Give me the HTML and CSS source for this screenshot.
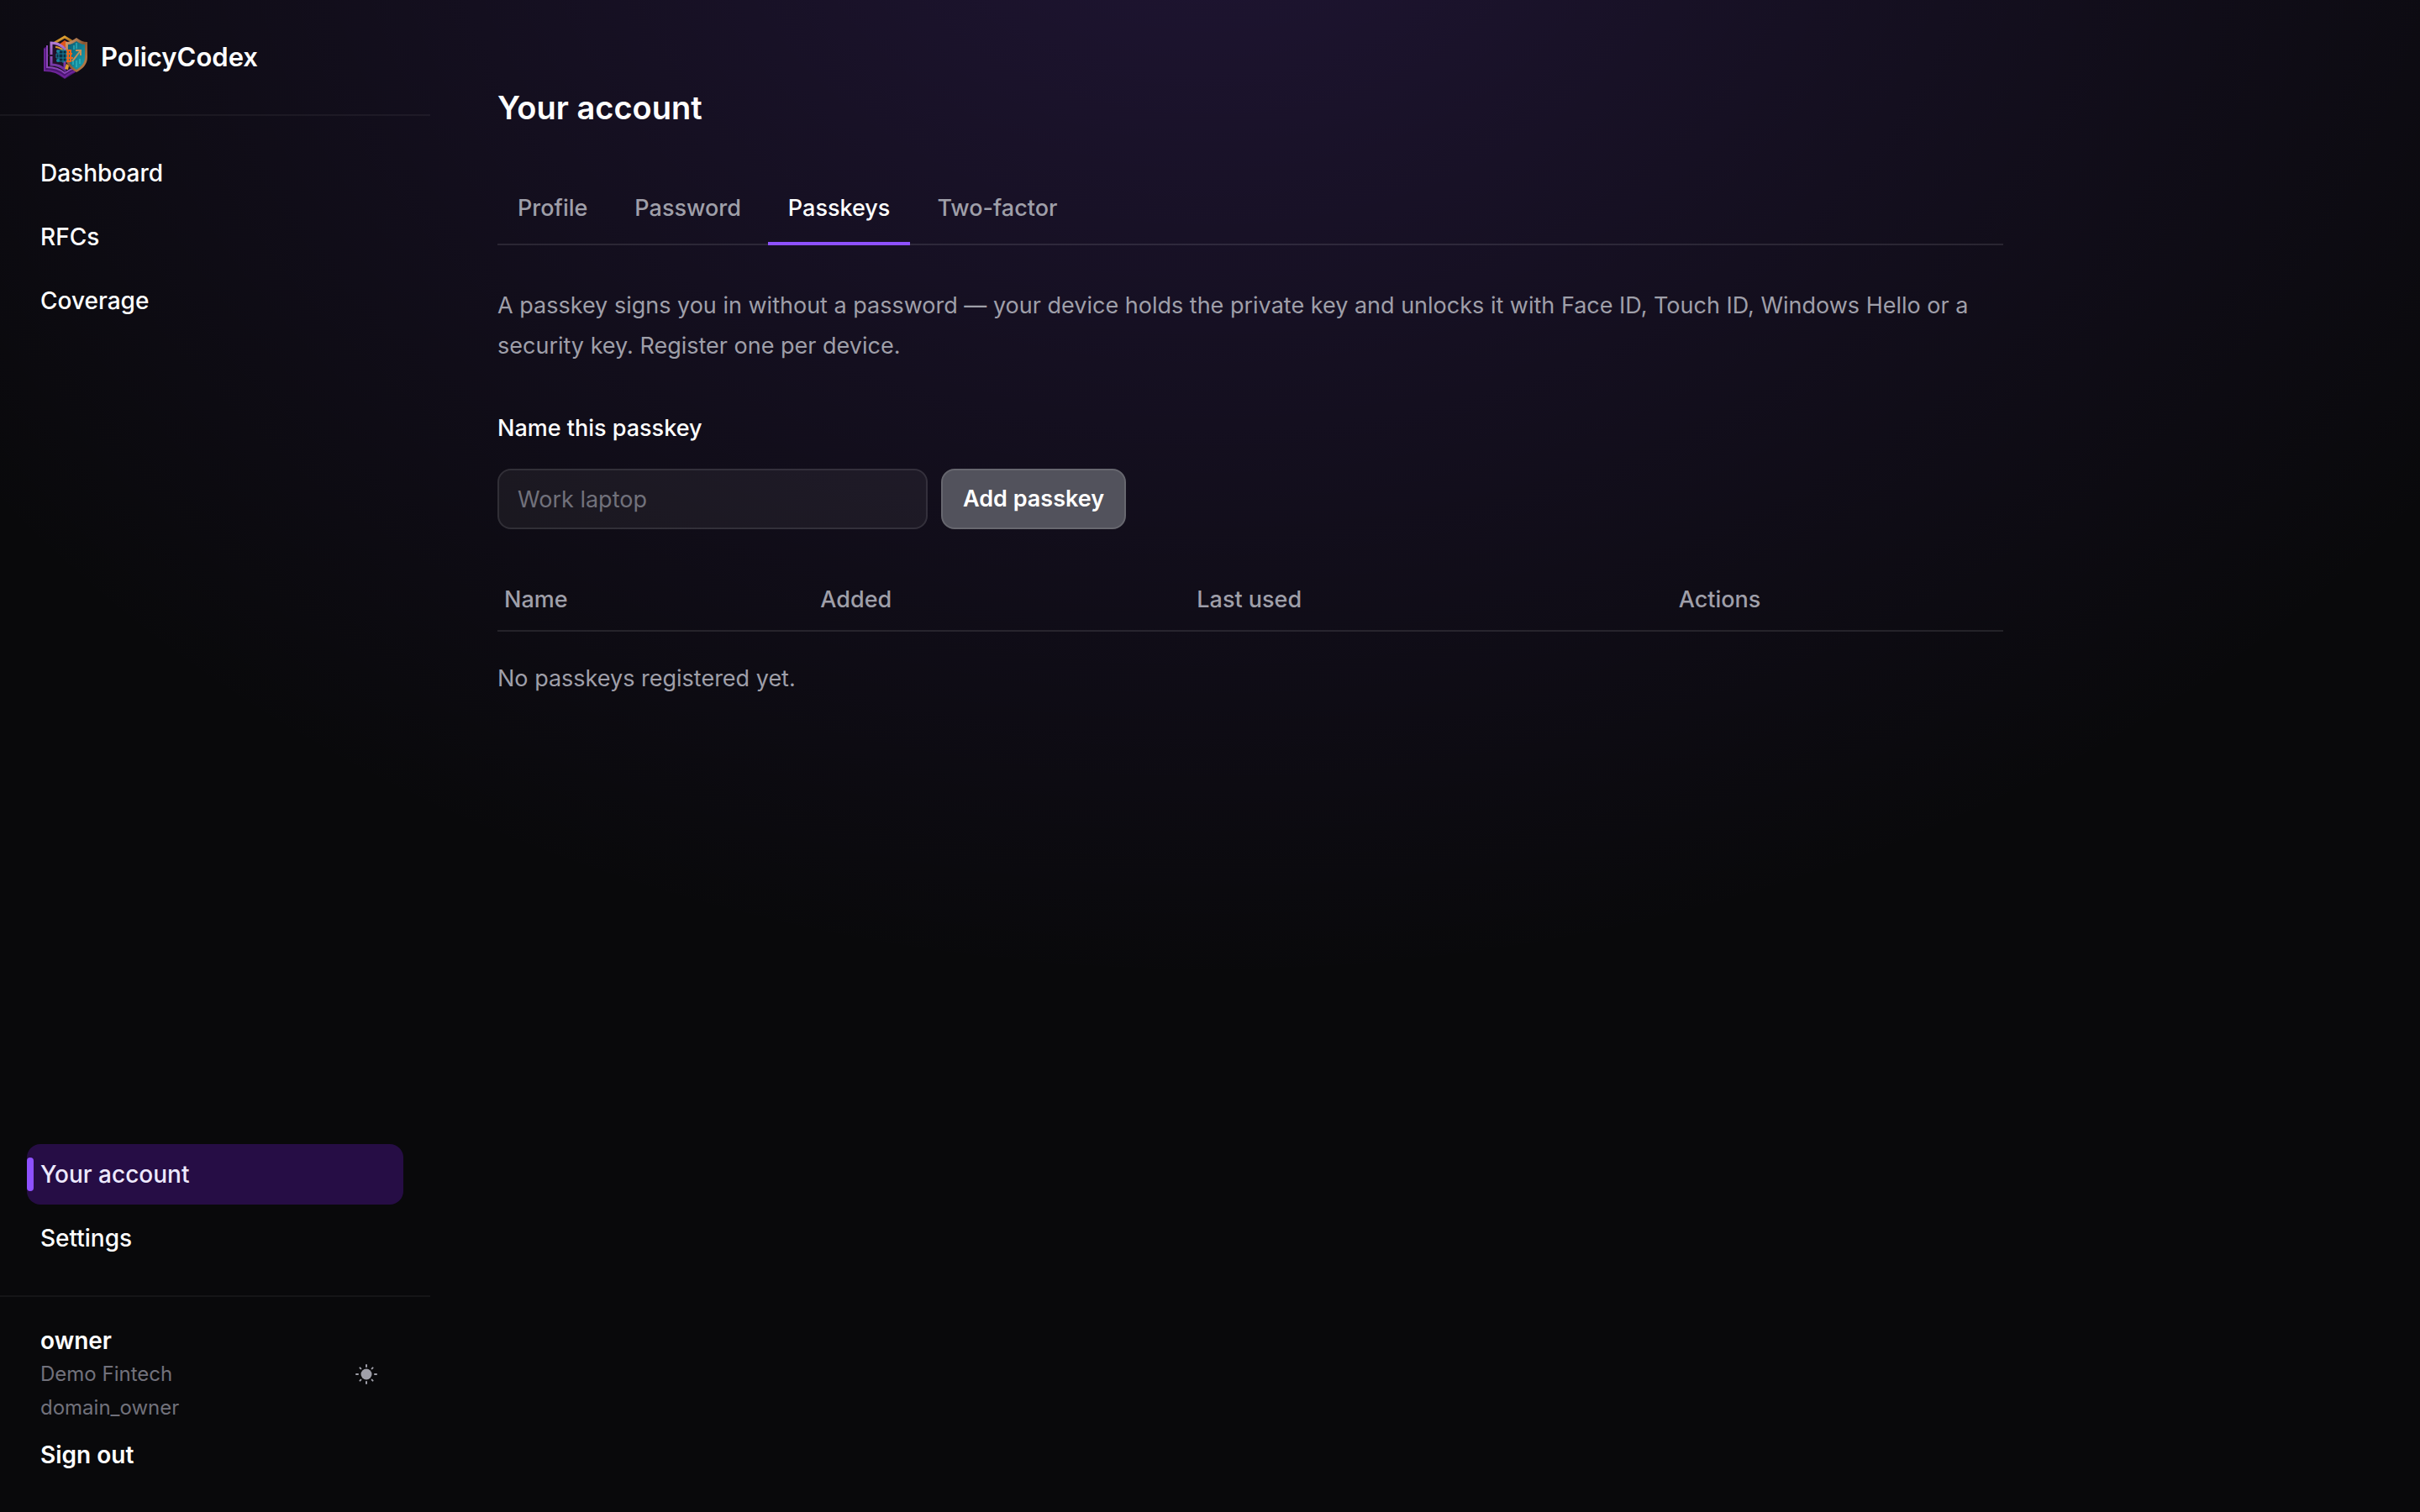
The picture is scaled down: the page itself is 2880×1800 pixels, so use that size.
FILE: index.html
```html
<!DOCTYPE html>
<html lang="en">
<head>
    <meta charset="UTF-8">
    <meta name="viewport" content="width=device-width, initial-scale=1">
    <title>Your account - PolicyCodex</title>
    <link rel="stylesheet" href="styles.css">
</head>
<body>
    <aside class="sidebar">
        <a class="brand" href="#">
            <svg class="brand-logo" viewBox="0 0 56 56" aria-hidden="true">
                <defs>
                    <linearGradient id="gold" x1="0" y1="0" x2="1" y2="1">
                        <stop offset="0" stop-color="#f2b53a"/>
                        <stop offset="1" stop-color="#9a5d14"/>
                    </linearGradient>
                    <linearGradient id="bronze" x1="0" y1="0" x2="1" y2="1">
                        <stop offset="0" stop-color="#e0a878"/>
                        <stop offset="0.5" stop-color="#8a5630"/>
                        <stop offset="1" stop-color="#c98a52"/>
                    </linearGradient>
                    <linearGradient id="teal" x1="0" y1="0" x2="1" y2="1">
                        <stop offset="0" stop-color="#0c5a72"/>
                        <stop offset="1" stop-color="#1ca3b0"/>
                    </linearGradient>
                    <linearGradient id="page" x1="0" y1="0" x2="0" y2="1">
                        <stop offset="0" stop-color="#b07ad6"/>
                        <stop offset="1" stop-color="#6a2a9c"/>
                    </linearGradient>
                </defs>
                <!-- gold hexagon behind the book -->
                <path d="M29 3 44 11v30L29 50 10 41V14z" fill="#17101c"/>
                <path d="M17 11 29 4l10 6" fill="none" stroke="url(#gold)" stroke-width="3"/>
                <path d="m22 13 7-5 6 4-6 5z" fill="#e2571a"/>
                <!-- book pages -->
                <path d="M4 17v26l11 2 14 9 13-8v-5l-13 6-13-6-9-2V16z" fill="#4b1672"/>
                <path d="M8 14v26c8 0 15 2 21 7 4-3 8-5 12-6" fill="none" stroke="#8a46b8" stroke-width="2"/>
                <path d="M5 18v26c9 0 17 2 24 8 4-4 8-6 12-7" fill="none" stroke="#6d2599" stroke-width="2"/>
                <path d="M13 11c7 0 12 3 16 7v25c-4-4-9-6-16-6z" fill="#221029" stroke="url(#page)" stroke-width="3"/>
                <path d="M18 16c4 0 7 2 10 4" fill="none" stroke="#d99a2c" stroke-width="2"/>
                <path d="M9 26h12" stroke="#251130" stroke-width="2"/>
                <path d="m29 42 2-6 3 2-1 5z" fill="#e0a030"/>
                <!-- shield -->
                <path d="M43 5c4 3 8 5 13 5v18c0 9-6 14-13 18-7-4-12-9-13-17V10c5 0 9-2 13-5z" fill="url(#bronze)"/>
                <path d="M43 9c3 2 6 4 10 4v15c0 7-4 11-10 15-6-4-9-8-10-14V13c4 0 7-2 10-4z" fill="url(#teal)"/>
                <path d="m38 33 10-13m0 6v-6h-6" fill="none" stroke="#c98f55" stroke-width="2"/>
                <path d="M40 14v5m3-8v7m4 12v6m-4-4v8m-4-7v4" stroke="#36cad0" stroke-width="1"/>
                <!-- circuit between book and shield -->
                <path d="M22 20h9v13h-9zM19 24h12v5H19zM27 18v17" fill="#0c2c40" stroke="#14809c" stroke-width="1"/>
                <path d="M31 20h5v13h-5m0-9h7m-7 5h8m-6-10v15" fill="none" stroke="#ea641c" stroke-width="2"/>
                <circle cx="21" cy="21" r="2" fill="#17849f"/>
                <circle cx="21" cy="32" r="2" fill="#17849f"/>
            </svg>
            <span>PolicyCodex</span>
        </a>

        <nav class="nav" aria-label="Main">
            <a class="nav-item" href="#">Dashboard</a>
            <a class="nav-item" href="#">RFCs</a>
            <a class="nav-item" href="#">Coverage</a>
        </nav>

        <nav class="nav nav-bottom" aria-label="Account">
            <a class="nav-item active" href="#" aria-current="page">Your account</a>
            <a class="nav-item" href="#">Settings</a>
        </nav>

        <div class="user">
            <div class="user-row">
                <div class="user-info">
                    <div class="user-name">owner</div>
                    <div class="user-meta">Demo Fintech</div>
                    <div class="user-meta">domain_owner</div>
                </div>
                <button class="theme-toggle" type="button" aria-label="Toggle theme">
                    <svg viewBox="0 0 32 32" aria-hidden="true">
                        <circle cx="16" cy="16" r="6.5" fill="currentColor"/>
                        <path d="M16 5v2M16 25v2M4 16h2M26 16h2M8.4 8.4l1 1M22.6 22.6l1 1M8.4 23.6l1-1M22.6 9.4l1-1" stroke="currentColor" stroke-width="2" stroke-linecap="round"/>
                    </svg>
                </button>
            </div>
            <button class="sign-out" type="button">Sign out</button>
        </div>
    </aside>

    <main class="main">
        <div class="content">
            <h1>Your account</h1>

            <nav class="tabs" aria-label="Account sections">
                <a class="tab" href="#">Profile</a>
                <a class="tab" href="#">Password</a>
                <a class="tab active" href="#" aria-current="page">Passkeys</a>
                <a class="tab" href="#">Two-factor</a>
            </nav>

            <p class="intro">A passkey signs you in without a password — your device holds the private key and unlocks it with Face ID, Touch ID, Windows Hello or a security key. Register one per device.</p>

            <form class="passkey-form">
                <label for="passkeyName">Name this passkey</label>
                <div class="form-row">
                    <input type="text" id="passkeyName" placeholder="Work laptop">
                    <button class="add-button" type="button">Add passkey</button>
                </div>
            </form>

            <table class="passkeys">
                <thead>
                    <tr>
                        <th class="col-name">Name</th>
                        <th class="col-added">Added</th>
                        <th class="col-used">Last used</th>
                        <th class="col-actions">Actions</th>
                    </tr>
                </thead>
            </table>
            <p class="empty">No passkeys registered yet.</p>
        </div>
    </main>
</body>
</html>
```

FILE: styles.css
```css
* {
    box-sizing: border-box;
}
body {
    margin: 0;
    min-height: 100vh;
    display: flex;
    font-family: Inter, "Liberation Sans", sans-serif;
    font-size: 27px;
    line-height: 40px;
    color: #fff;
    background: radial-gradient(ellipse 62% 75% at 50% -10%, rgba(142, 81, 255, 0.17), transparent) #09090b;
}
a {
    color: inherit;
    text-decoration: none;
}
button, input {
    font: inherit;
    color: inherit;
}

/* Sidebar */
.sidebar {
    flex: 0 0 512px;
    display: flex;
    flex-direction: column;
    font-size: 28px;
    font-weight: 500;
}
.brand {
    display: flex;
    align-items: center;
    gap: 16px;
    padding: 40px 48px;
    border-bottom: 2px solid rgba(255, 255, 255, 0.05);
    font-size: 31px;
    font-weight: 600;
}
.brand-logo {
    width: 56px;
    height: 56px;
}
.nav {
    display: flex;
    flex-direction: column;
    gap: 4px;
    padding: 32px;
}
.nav-bottom {
    margin-top: auto;
}
.nav-item {
    position: relative;
    padding: 16px;
    border-radius: 16px;
}
.nav-item.active {
    background: #260d45;
    color: #ede9fe;
}
.nav-item.active::before {
    content: "";
    position: absolute;
    left: 0;
    top: 16px;
    bottom: 16px;
    width: 8px;
    border-radius: 4px;
    background: #8e51ff;
}
.user {
    padding: 32px 48px 48px;
    border-top: 2px solid rgba(255, 255, 255, 0.05);
}
.user-row {
    display: flex;
    align-items: center;
    justify-content: space-between;
}
.user-name {
    font-weight: 600;
}
.user-meta {
    font-size: 24px;
    font-weight: 400;
    color: #71717b;
}
.theme-toggle {
    padding: 12px;
    border: 0;
    background: none;
    color: #9f9fa9;
}
.theme-toggle svg {
    display: block;
    width: 32px;
    height: 32px;
}
.sign-out {
    display: block;
    margin-top: 16px;
    padding: 0;
    border: 0;
    background: none;
    font-weight: 600;
}

/* Main */
.main {
    flex: 1;
    padding: 96px 80px;
}
.content {
    max-width: 1792px;
}
h1 {
    margin: 0;
    font-size: 38px;
    line-height: 64px;
    font-weight: 600;
}
.tabs {
    display: flex;
    gap: 8px;
    margin-top: 48px;
    border-bottom: 2px solid rgba(255, 255, 255, 0.1);
}
.tab {
    margin-bottom: -2px;
    padding: 20px 24px;
    border-bottom: 4px solid transparent;
    font-weight: 500;
    color: #9f9fa9;
}
.tab.active {
    border-color: #8e51ff;
    color: #fff;
}
.intro {
    margin: 48px 0 0;
    line-height: 48px;
    color: #9f9fa9;
}
.passkey-form {
    margin-top: 54px;
}
.passkey-form label {
    font-weight: 500;
}
.form-row {
    display: flex;
    gap: 16px;
    margin-top: 28px;
}
.form-row input {
    width: 512px;
    height: 72px;
    padding: 0 22px;
    border: 2px solid rgba(255, 255, 255, 0.1);
    border-radius: 16px;
    background: rgba(255, 255, 255, 0.05);
}
.form-row input::placeholder {
    color: #71717b;
    opacity: 1;
}
.add-button {
    height: 72px;
    padding: 0 24px;
    border: 2px solid #67676f;
    border-radius: 16px;
    background: #52525c;
    font-weight: 600;
}
.passkeys {
    width: 100%;
    margin-top: 48px;
    border-collapse: collapse;
    table-layout: fixed;
}
.passkeys th {
    padding: 16px 8px;
    border-bottom: 2px solid rgba(255, 255, 255, 0.1);
    text-align: left;
    font-weight: 500;
    color: #9f9fa9;
}
.col-name {
    width: 21%;
}
.col-added {
    width: 25%;
}
.col-used {
    width: 32%;
}
.col-actions {
    width: 22%;
}
.empty {
    margin: 36px 0 0;
    color: #9f9fa9;
}
```
